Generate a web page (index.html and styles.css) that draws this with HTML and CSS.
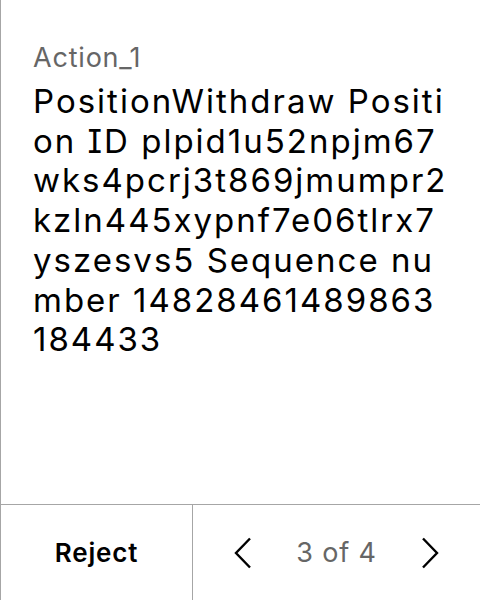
FILE: index.html
```html
<!DOCTYPE html>
<html>
<head>
<meta charset="utf-8">
<link rel="stylesheet" href="styles.css">
</head>
<body>
<div class="screen">
  <div class="content">
    <div class="label">Action_1</div>
    <div class="value">
      <span class="line">PositionWithdraw Positi</span>
      <span class="line">on ID plpid1u52npjm67</span>
      <span class="line">wks4pcrj3t869jmumpr2</span>
      <span class="line">kzln445xypnf7e06tlrx7</span>
      <span class="line">yszesvs5 Sequence nu</span>
      <span class="line">mber 14828461489863</span>
      <span class="line">184433</span>
    </div>
  </div>
  <div class="footer">
    <div class="reject">Reject</div>
    <div class="pager">
      <svg class="chev" width="20" height="32" viewBox="0 0 20 32"><path d="M17 1.5 L3 16 L17 30.5" fill="none" stroke="#000" stroke-width="2.4"/></svg>
      <span class="count">3 of 4</span>
      <svg class="chev" width="20" height="32" viewBox="0 0 20 32"><path d="M3 1.5 L17 16 L3 30.5" fill="none" stroke="#000" stroke-width="2.4"/></svg>
    </div>
  </div>
</div>
</body>
</html>
```

FILE: styles.css
```css
html, body {
  margin: 0;
  padding: 0;
  background: #fff;
}
.screen {
  width: 480px;
  height: 600px;
  box-sizing: border-box;
  border-left: 1px solid #a6a6a6;
  display: flex;
  flex-direction: column;
  font-family: Inter, "Noto Sans", sans-serif;
  font-feature-settings: "cv08";
}
.content {
  flex: 1;
  padding: 40px 24px 0 32px;
}
.label {
  font-size: 27px;
  line-height: 36px;
  letter-spacing: 0.8px;
  color: #666;
}
.value {
  margin-top: 6px;
  font-size: 33px;
  line-height: 39.7px;
  letter-spacing: 2px;
  color: #000;
}
.line {
  display: block;
  white-space: nowrap;
}
.footer {
  height: 96px;
  box-sizing: border-box;
  border-top: 1px solid #a6a6a6;
  display: flex;
}
.reject {
  width: 191px;
  border-right: 1px solid #a6a6a6;
  display: flex;
  align-items: center;
  justify-content: center;
  font-size: 26px;
  font-weight: 600;
  letter-spacing: 0.8px;
  color: #000;
}
.pager {
  flex: 1;
  display: flex;
  align-items: center;
  justify-content: space-between;
  padding: 0 40px;
}
.count {
  font-size: 27px;
  letter-spacing: 0.8px;
  color: #666;
}
.chev {
  display: block;
}
```
